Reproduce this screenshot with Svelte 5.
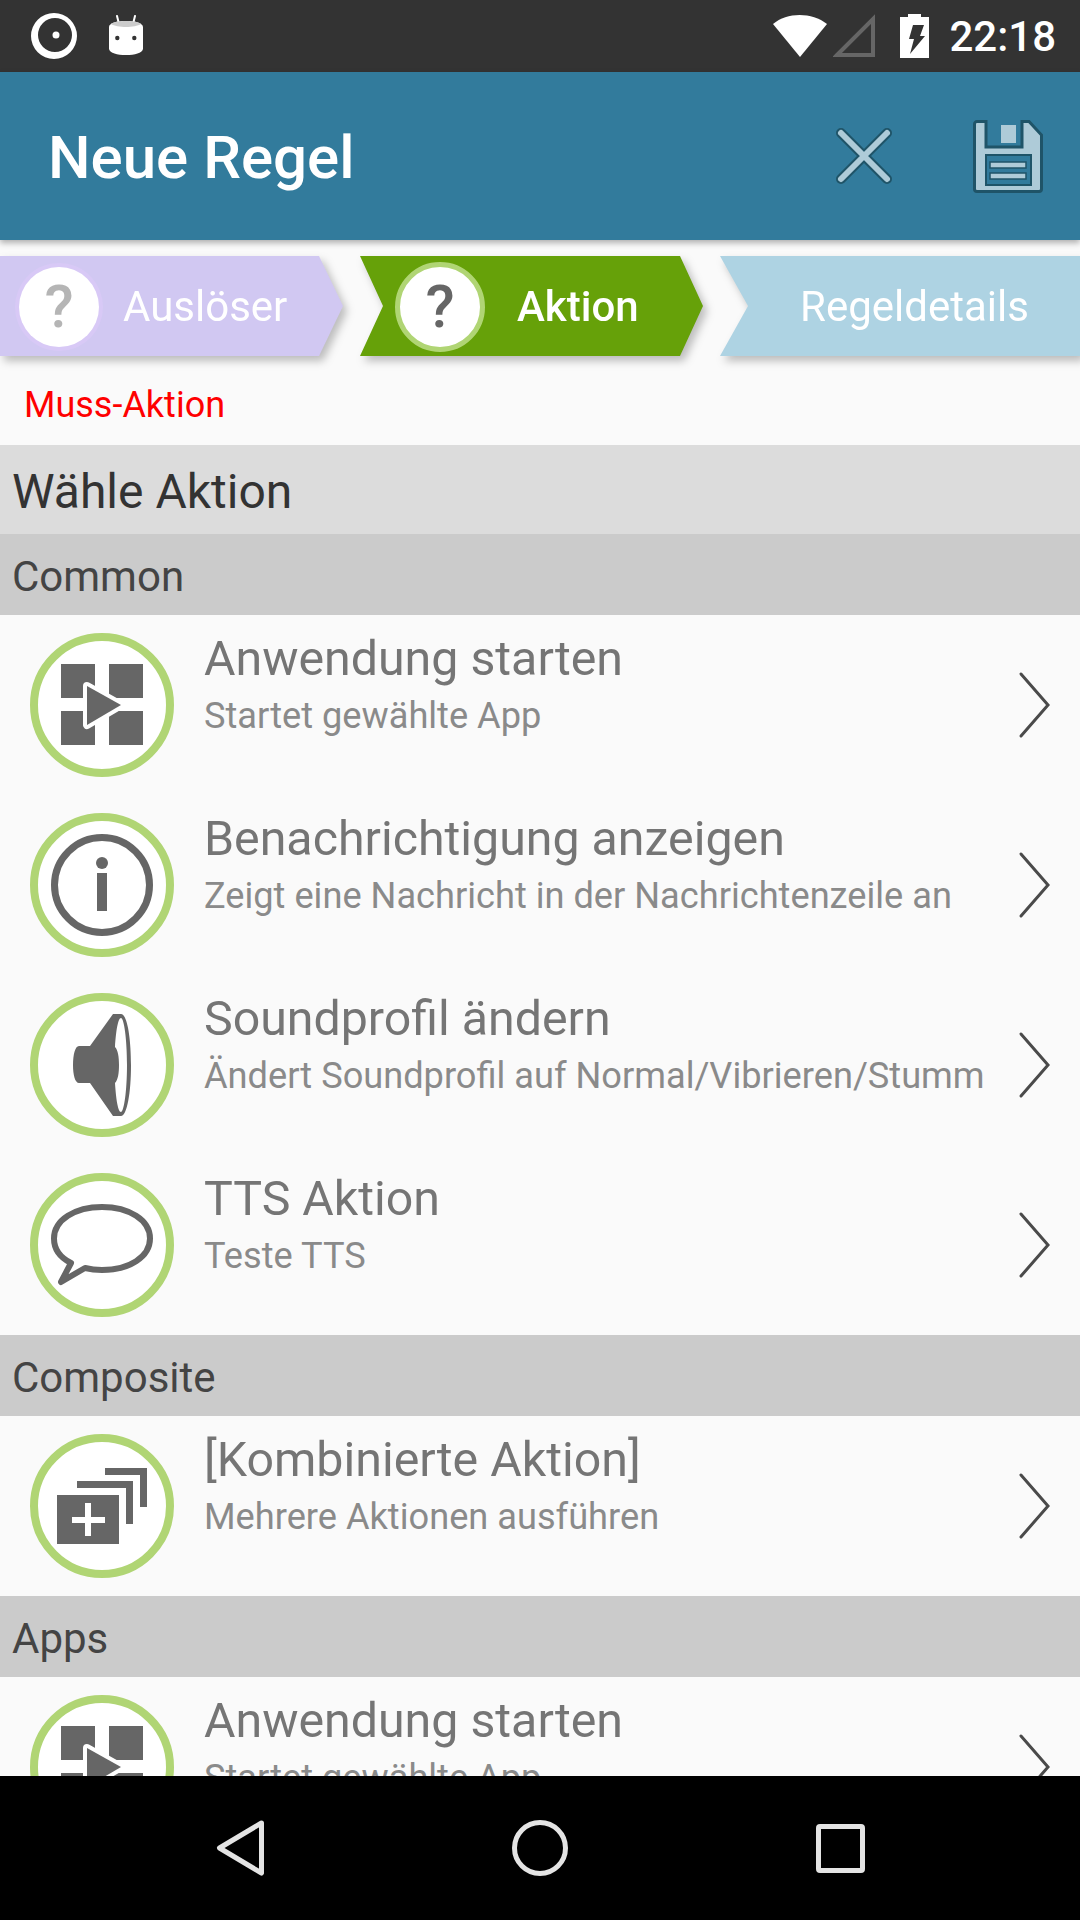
<script>
  const rows = [
    { title: "Anwendung starten", sub: "Startet gewählte App", icon: "app" },
    { title: "Benachrichtigung anzeigen", sub: "Zeigt eine Nachricht in der Nachrichtenzeile an", icon: "info" },
    { title: "Soundprofil ändern", sub: "Ändert Soundprofil auf Normal/Vibrieren/Stumm", icon: "sound" },
    { title: "TTS Aktion", sub: "Teste TTS", icon: "tts" },
  ];
  const composite = [{ title: "[Kombinierte Aktion]", sub: "Mehrere Aktionen ausführen", icon: "combo" }];
  const apps = [{ title: "Anwendung starten", sub: "Startet gewählte App", icon: "app" }];
  const groups = [
    { name: "Common", rows },
    { name: "Composite", rows: composite },
    { name: "Apps", rows: apps },
  ];
</script>

<div class="screen">
  <div class="status">
    <div class="status-left">
      <svg width="46" height="46" viewBox="0 0 46 46">
        <path fill-rule="evenodd" d="M23 0a23 23 0 1 0 0 46a23 23 0 1 0 0-46zM24 5a17 17 0 1 1 0 34a17 17 0 1 1 0-34z" fill="#fff" />
        <circle cx="25" cy="22" r="3.500" fill="#fff" />
      </svg>
      <svg width="34" height="42" viewBox="0 0 34 42">
        <path d="M8 1l2 8M26 1l-2 8" stroke="#fff" stroke-width="2" stroke-linecap="round" />
        <path d="M0 12c0-4 8-6 17-6s17 2 17 6c1 8 1 17 0 22-1 4-8 6-17 6S1 38 0 34c-1-5-1-14 0-22z" fill="#fff" />
        <path d="M2 9c2-2 8-3 15-3s13 1 15 3c-3 2-9 3-15 3S5 11 2 9z" fill="#ccc" />
        <circle cx="8.300" cy="23" r="2.200" fill="#333" />
        <circle cx="25.300" cy="23" r="2.200" fill="#333" />
      </svg>
    </div>
    <div class="status-right">
      <svg width="54" height="44" viewBox="0 0 54 44">
        <path d="M0 10C14 -2 39 -2 54 10L27 43z" fill="#fff" />
      </svg>
      <svg class="signal" width="42" height="44" viewBox="0 0 42 44">
        <path d="M4 41L40 5v36z" fill="none" stroke="#666" stroke-width="4" />
      </svg>
      <svg class="battery" width="29" height="44" viewBox="0 0 29 44">
        <path d="M8 0h13v3h8v41H0V3h8z" fill="#fff" />
        <path d="M13 11h11l-4 11h5L10 40l4-15H9z" fill="#333" />
      </svg>
      <span class="clock">22:18</span>
    </div>
  </div>

  <header class="appbar">
    <h1>Neue Regel</h1>
    <div class="actions">
      <svg width="58" height="58" viewBox="0 0 58 58">
        <path d="M6 6l46 46M52 6L6 52" stroke="#1f5468" stroke-width="10" stroke-linecap="round" />
        <path d="M6 6l46 46M52 6L6 52" stroke="#aecbd8" stroke-width="6" stroke-linecap="round" />
      </svg>
      <svg width="70" height="73" viewBox="0 0 70 73">
        <path d="M4 1.500h9V27h36V1.500h7L68.500 15v54a2.500 2.500 0 0 1-2.500 2.500H4A2.500 2.500 0 0 1 1.500 69V4A2.500 2.500 0 0 1 4 1.500z" fill="#aecbd8" stroke="#1f5468" stroke-width="3" />
        <rect x="28" y="5" width="15" height="18" fill="#aecbd8" />
        <rect x="13" y="35" width="45" height="30" fill="#327b9c" stroke="#1f5468" stroke-width="2" />
        <rect x="17" y="42" width="36" height="6" fill="#aecbd8" stroke="#1f5468" stroke-width="1.500" />
        <rect x="17" y="53" width="36" height="6" fill="#aecbd8" stroke="#1f5468" stroke-width="1.500" />
      </svg>
    </div>
  </header>

  <nav class="steps">
    <div class="step first">
      <span class="q-circle done">?</span>
      <span>Auslöser</span>
    </div>
    <div class="step active">
      <span class="q-circle current">?</span>
      <span>Aktion</span>
    </div>
    <div class="step last">
      <span>Regeldetails</span>
    </div>
  </nav>

  <div class="must">Muss-Aktion</div>
  <div class="choose">Wähle Aktion</div>

  <div class="list">
    {#each groups as group}
      <div class="group-head">{group.name}</div>
      {#each group.rows as row}
        <div class="row">
          <div class="badge">
            <svg width="128" height="128" viewBox="8 8 128 128">
              {#if row.icon === "app"}
                <path d="M31 31h34v34H31zM79 31h34v34H79zM31 78h34v34H31zM79 78h34v34H79z" fill="#666" />
                <path d="M57 53l34 19-34 20z" fill="#fff" stroke="#fff" stroke-width="8" stroke-linejoin="round" />
                <path d="M57 53l34 19-34 20z" fill="#666" />
              {:else if row.icon === "info"}
                <circle cx="72" cy="72" r="47.500" fill="none" stroke="#666" stroke-width="7" />
                <circle cx="72" cy="50" r="6" fill="#666" />
                <rect x="67" y="60" width="10" height="38" fill="#666" />
              {:else if row.icon === "sound"}
                <path d="M49 53h11L83 21h8c6 0 10 23 10 51s-4 51-10 51h-8L60 90H49c-4 0-6-8-6-18s2-19 6-19z" fill="#666" />
                <path d="M85 54c1-16 3-29 6-29 3 0 6 21 6 47s-3 47-6 47c-3 0-5-13-6-29 3-3 4-10 4-18s-1-15-4-18z" fill="#fff" />
              {:else if row.icon === "tts"}
                <path d="M41 90C29 84 24 75 24 65.500 24 47 45 34 72 34s48 13 48 31.500S99 97 72 97c-6 0-11-.5-17-2l-24 14z" fill="none" stroke="#666" stroke-width="6" stroke-linejoin="round" />
              {:else}
                <path d="M27 61h62v49H27z" fill="#666" />
                <path d="M47 47h56v43h-7V54H47zM75 34h42v39h-7V41H75z" fill="#666" />
                <path d="M55 69h6v14h14v6H61v13h-6V89H42v-6h13z" fill="#fff" />
              {/if}
            </svg>
          </div>
          <div class="row-text">
            <div class="row-title">{row.title}</div>
            <div class="row-sub">{row.sub}</div>
          </div>
          <svg class="chevron" width="34" height="68" viewBox="0 0 34 68">
            <path d="M3 3l27 31L3 65" fill="none" stroke="#4a4a4a" stroke-width="3" stroke-linecap="round" />
          </svg>
        </div>
      {/each}
    {/each}
  </div>

  <div class="navbar">
    <svg width="48" height="56" viewBox="0 0 48 56">
      <path d="M45.500 3L3.500 28l42 25z" fill="none" stroke="#e4e4e4" stroke-width="5" stroke-linejoin="round" />
    </svg>
    <svg width="56" height="56" viewBox="0 0 56 56">
      <circle cx="28" cy="28" r="25.500" fill="none" stroke="#e4e4e4" stroke-width="5" />
    </svg>
    <svg width="49" height="49" viewBox="0 0 49 49">
      <rect x="2.500" y="2.500" width="44" height="44" rx="1.500" fill="none" stroke="#e4e4e4" stroke-width="5" />
    </svg>
  </div>
</div>

<style>
  :global(body) {
    margin: 0;
    background: #fafafa;
  }
  .screen {
    display: flex;
    flex-direction: column;
    width: 1080px;
    height: 1920px;
    overflow: hidden;
    font-family: Roboto, "Noto Sans", sans-serif;
    background: #fafafa;
  }
  .status {
    flex: none;
    height: 72px;
    display: flex;
    justify-content: space-between;
    align-items: center;
    background: #333;
    padding: 0 24px 0 31px;
    box-sizing: border-box;
  }
  .status-left {
    display: flex;
    align-items: center;
    gap: 32px;
  }
  .status-right {
    display: flex;
    align-items: center;
  }
  .signal {
    margin-left: 6px;
  }
  .battery {
    margin-left: 25px;
  }
  .clock {
    margin-left: 20px;
    color: #fff;
    font-size: 42px;
    font-weight: 500;
  }
  .appbar {
    flex: none;
    position: relative;
    height: 168px;
    display: flex;
    align-items: center;
    justify-content: space-between;
    box-sizing: border-box;
    background: #327b9c;
    box-shadow: 0 3px 6px rgba(0, 0, 0, 0.3);
    padding: 0 37px 0 48px;
  }
  h1 {
    margin: 2px 0 0;
    color: #fff;
    font-size: 60px;
    font-weight: 500;
  }
  .actions {
    display: flex;
    align-items: center;
    gap: 80px;
  }
  .steps {
    flex: none;
    display: flex;
    height: 100px;
    margin-top: 16px;
    filter: drop-shadow(4px 5px 4px rgba(0, 0, 0, 0.25));
  }
  .step {
    display: flex;
    align-items: center;
    box-sizing: border-box;
    height: 100%;
    padding-top: 1px;
    color: #fff;
    font-size: 42px;
  }
  .first {
    width: 343px;
    background: #d1c8f2;
    clip-path: polygon(0 0, 319px 0, 100% 50%, 319px 100%, 0 100%);
    padding-left: 19px;
  }
  .active {
    width: 343px;
    margin-left: 17px;
    background: #66a109;
    clip-path: polygon(0 0, 320px 0, 100% 50%, 320px 100%, 0 100%, 23px 50%);
    padding-left: 35px;
    font-weight: 500;
  }
  .last {
    flex: 1;
    margin-left: 17px;
    background: #aed3e3;
    clip-path: polygon(0 0, 100% 0, 100% 100%, 0 100%, 28px 50%);
    padding-left: 80px;
  }
  .q-circle {
    width: 80px;
    height: 80px;
    border-radius: 50%;
    background: #fff;
    display: flex;
    align-items: center;
    justify-content: center;
    font-size: 60px;
    font-weight: 500;
    flex: none;
  }
  .done {
    color: #b5b5b5;
    box-shadow: 0 0 0 4px #d8c9f6;
    margin-right: 24px;
  }
  .current {
    color: #666;
    border: 5px solid #b0d574;
    margin-right: 32px;
  }
  .must {
    flex: none;
    height: 89px;
    line-height: 99px;
    padding-left: 24px;
    box-sizing: border-box;
    color: #f00;
    font-size: 36px;
  }
  .choose {
    flex: none;
    height: 89px;
    box-sizing: border-box;
    display: flex;
    align-items: center;
    padding: 3px 0 0 12px;
    background: #dcdcdc;
    color: #333;
    font-size: 48px;
  }
  .list {
    flex: 1;
    min-height: 0;
    overflow: hidden;
  }
  .group-head {
    height: 81px;
    box-sizing: border-box;
    display: flex;
    align-items: center;
    padding: 3px 0 0 12px;
    background: #cbcbcb;
    color: #444;
    font-size: 42px;
  }
  .row {
    height: 180px;
    display: flex;
    align-items: center;
    box-sizing: border-box;
    padding: 0 28px 0 30px;
  }
  .badge {
    flex: none;
    width: 128px;
    height: 128px;
    border: 8px solid #b0d574;
    border-radius: 50%;
    background: #fff;
  }
  .badge svg {
    display: block;
  }
  .row-text {
    flex: 1;
    min-width: 0;
    align-self: flex-start;
    margin-left: 30px;
    padding-top: 16px;
  }
  .row-title {
    color: #757575;
    font-size: 48.300px;
    line-height: 56px;
    white-space: nowrap;
  }
  .row-sub {
    margin-top: 8px;
    color: #8a8a8a;
    font-size: 36.200px;
    line-height: 42px;
    white-space: nowrap;
  }
  .chevron {
    flex: none;
  }
  .navbar {
    flex: none;
    height: 144px;
    display: flex;
    align-items: center;
    gap: 248px;
    padding-left: 216px;
    background: #000;
  }
</style>
